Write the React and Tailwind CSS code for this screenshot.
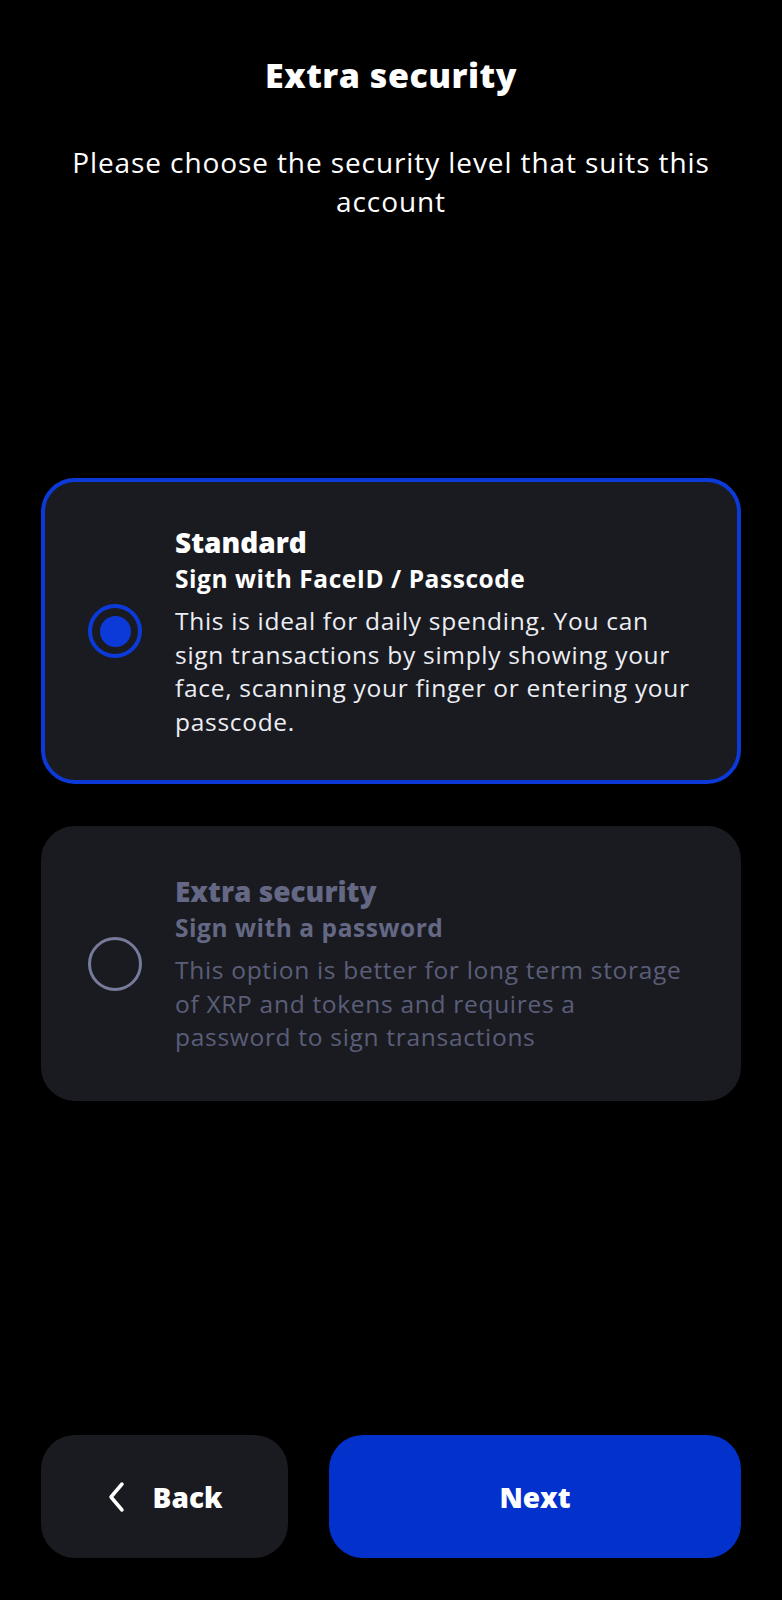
import React from "react";

const font = { fontFamily: "'Open Sans', 'Noto Sans', sans-serif" };

const Radio = ({ checked }) =>
  checked ? (
    <div className="w-[54px] h-[54px] shrink-0 rounded-full border-[4px] border-[#0b3ad8] flex items-center justify-center">
      <div className="w-[31px] h-[31px] rounded-full bg-[#0b3ad8]" />
    </div>
  ) : (
    <div className="w-[54px] h-[54px] shrink-0 rounded-full border-[3.5px] border-[#777b9a]" />
  );

const Option = ({ checked, title, subtitle, body, height }) => (
  <div
    className={`flex items-center rounded-[34px] px-[43px] ${height} ${
      checked ? "bg-[#1a1b21] border-[4px] border-[#0b3ad8]" : "bg-[#1a1b21] border-[4px] border-[#1a1b21]"
    }`}
  >
    <Radio checked={checked} />
    <div className="ml-[33px] w-[525px] flex flex-col">
      <div className={`text-[28px] font-extrabold leading-[36px] ${checked ? "text-white" : "text-[#646884]"}`}>{title}</div>
      <div className={`text-[24.5px] font-bold leading-[38px] tracking-[0.55px] ${checked ? "text-white" : "text-[#646884]"}`}>
        {subtitle}
      </div>
      <div className={`mt-[6px] text-[24.5px] leading-[33.5px] tracking-[0.7px] ${checked ? "text-[#eceef3]" : "text-[#5a5e78]"}`}>
        {body}
      </div>
    </div>
  </div>
);

export default function App() {
  return (
    <div className="w-[782px] h-[1600px] bg-black flex flex-col px-[41px]" style={font}>
      <h1 className="mt-[55px] text-center text-white text-[34px] font-extrabold leading-[40px] tracking-[0.5px]">Extra security</h1>
      <p className="mt-[48px] text-center text-white text-[28px] leading-[39px] tracking-[0.9px] px-[10px]">
        Please choose the security level that suits this account
      </p>

      <div className="mt-[257px] flex flex-col gap-[42px]">
        <Option
          checked
          height="h-[306px]"
          title="Standard"
          subtitle="Sign with FaceID / Passcode"
          body="This is ideal for daily spending. You can sign transactions by simply showing your face, scanning your finger or entering your passcode."
        />
        <Option
          height="h-[275px]"
          title="Extra security"
          subtitle="Sign with a password"
          body="This option is better for long term storage of XRP and tokens and requires a password to sign transactions"
        />
      </div>

      <div className="mt-auto mb-[42px] flex gap-[41px]">
        <button className="w-[247px] h-[123px] rounded-[34px] bg-[#1a1b21] flex items-center justify-center gap-[28px] text-white">
          <svg width="18" height="32" viewBox="0 0 18 32" fill="none">
            <path d="M15 3 L4 16 L15 29" stroke="white" strokeWidth="3.5" strokeLinecap="round" strokeLinejoin="round" />
          </svg>
          <span className="text-[28px] font-extrabold">Back</span>
        </button>
        <button className="flex-1 h-[123px] rounded-[34px] bg-[#0331cc] flex items-center justify-center text-white">
          <span className="text-[28px] font-extrabold">Next</span>
        </button>
      </div>
    </div>
  );
}
